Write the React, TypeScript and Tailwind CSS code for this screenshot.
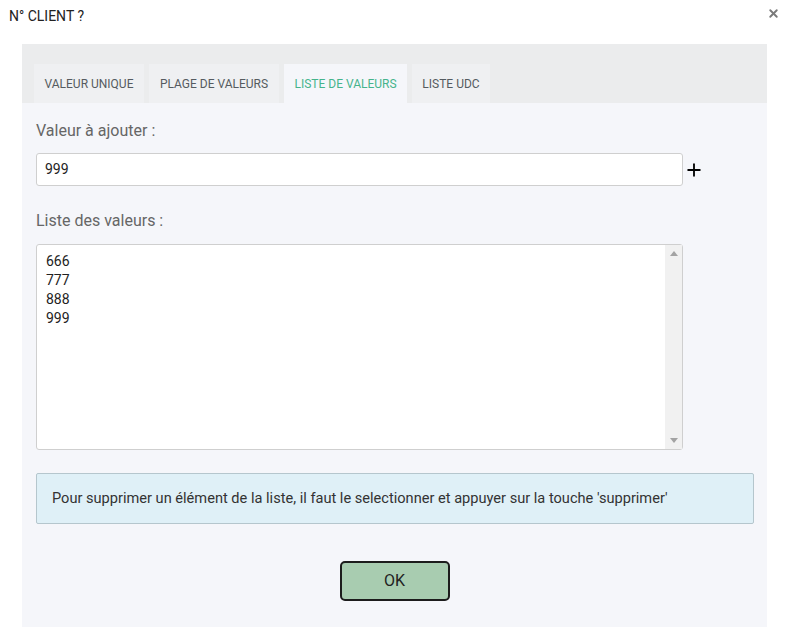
import { X, Plus } from "lucide-react";

const tabs = [
  { label: "VALEUR UNIQUE", width: "w-[110px]" },
  { label: "PLAGE DE VALEURS", width: "w-[130px]" },
  { label: "LISTE DE VALEURS", width: "w-[123px]", active: true },
  { label: "LISTE UDC", width: "w-[78px]" },
];

const values = ["666", "777", "888", "999"];

export default function App() {
  return (
    <div className="w-[786px] h-[640px] bg-white font-['Roboto',sans-serif] text-[#333]">
      <div className="flex items-start justify-between h-[44px] pl-[9px] pr-[6px]">
        <span className="mt-[6px] text-[14px] text-[#222]">N° CLIENT ?</span>
        <X className="mt-[7px] w-[13px] h-[13px] text-[#7a7a7a]" strokeWidth={3.5} />
      </div>

      <div className="ml-[22px] w-[745px] h-[583px] bg-[#f5f6fa] flex flex-col">
        <div className="h-[59px] bg-[#ebeced] flex items-end pl-[12px] gap-[5px]">
          {tabs.map((t) => (
            <div
              key={t.label}
              className={`${t.width} h-[39px] flex items-center justify-center pt-[1px] text-[12px] ${
                t.active ? "bg-[#f5f6fa] text-[#45b48c]" : "bg-[#eff0f2] text-[#555b60]"
              }`}
            >
              {t.label}
            </div>
          ))}
        </div>

        <div className="flex flex-col px-[14px]">
          <label className="mt-[18px] text-[16px] text-[#666] leading-[20px]">Valeur à ajouter :</label>
          <div className="mt-[12px] flex items-center">
            <div className="w-[647px] h-[33px] bg-white border border-[#cfcfcf] rounded-[3px] flex items-center px-[8px] text-[14px] text-[#222]">
              999
            </div>
            <Plus className="ml-[1px] w-[20px] h-[20px] text-black" strokeWidth={2.2} />
          </div>

          <label className="mt-[25px] text-[16px] text-[#666] leading-[20px]">Liste des valeurs :</label>
          <div className="mt-[13px] w-[647px] h-[206px] bg-white border border-[#cfcfcf] rounded-[3px] flex">
            <div className="flex-1 pt-[7px] pl-[9px] text-[14px] leading-[19px] text-[#222]">
              {values.map((v) => (
                <div key={v}>{v}</div>
              ))}
            </div>
            <div className="w-[17px] bg-[#f1f1f1] flex flex-col justify-between items-center py-[6px]">
              <svg width="8" height="5" viewBox="0 0 8 5">
                <polygon points="4,0 8,5 0,5" fill="#a3a3a3" />
              </svg>
              <svg width="8" height="5" viewBox="0 0 8 5">
                <polygon points="0,0 8,0 4,5" fill="#a3a3a3" />
              </svg>
            </div>
          </div>

          <div className="mt-[23px] w-[718px] h-[51px] bg-[#dff0f7] border border-[#b5c6cd] rounded-[2px] flex items-center px-[15px] text-[14.6px] text-[#333]">
            Pour supprimer un élément de la liste, il faut le selectionner et appuyer sur la touche 'supprimer'
          </div>
        </div>

        <div className="mt-[37px] flex justify-center">
          <button className="w-[110px] h-[40px] bg-[#a8ccb0] border-2 border-[#1c1c1c] rounded-[5px] text-[16px] text-[#222]">
            OK
          </button>
        </div>
      </div>
    </div>
  );
}
